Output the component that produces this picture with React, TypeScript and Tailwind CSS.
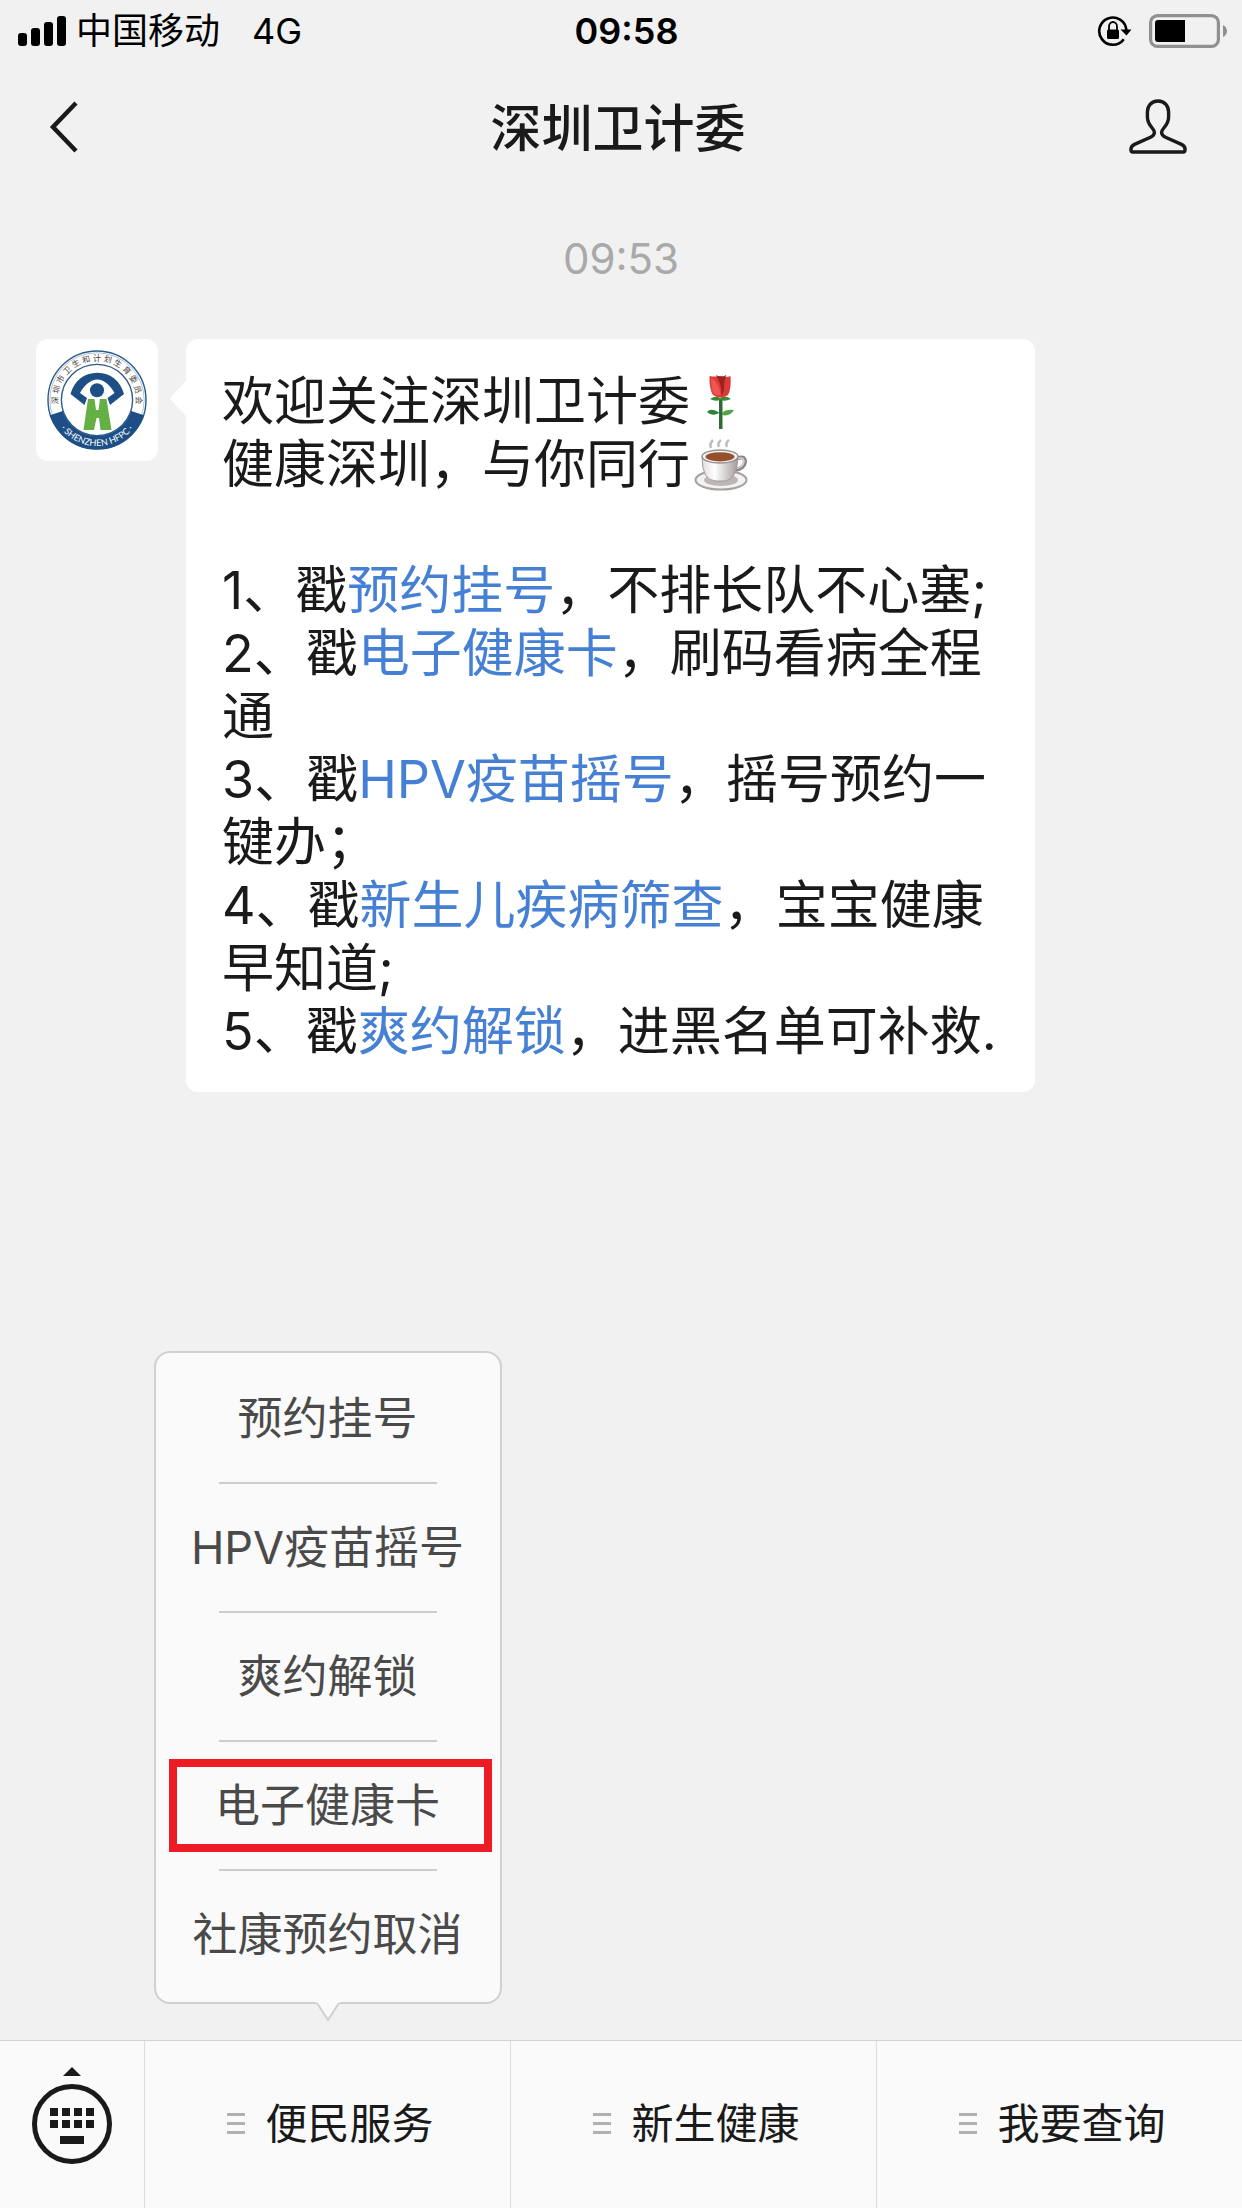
import React, { useState } from 'react';

interface MenuItem {
  id: string;
  label: string;
  marked?: boolean;
}

const menuItems: MenuItem[] = [
  { id: 'booking', label: '预约挂号' },
  { id: 'hpv', label: 'HPV疫苗摇号' },
  { id: 'unlock', label: '爽约解锁' },
  { id: 'card', label: '电子健康卡', marked: true },
  { id: 'cancel', label: '社康预约取消' },
];

const services = [
  { no: '1', link: '预约挂号', rest: '，不排长队不心塞;' },
  { no: '2', link: '电子健康卡', rest: '，刷码看病全程通' },
  { no: '3', link: 'HPV疫苗摇号', rest: '，摇号预约一键办；' },
  { no: '4', link: '新生儿疾病筛查', rest: '，宝宝健康早知道;' },
  { no: '5', link: '爽约解锁', rest: '，进黑名单可补救.' },
];

const tabs = ['便民服务', '新生健康', '我要查询'];

function SignalIcon() {
  return (
    <svg width="48" height="30" viewBox="0 0 48 30" aria-hidden="true">
      <rect x="0" y="17" width="9" height="13" rx="3" />
      <rect x="13" y="12" width="9" height="18" rx="3" />
      <rect x="26" y="6" width="9" height="24" rx="3" />
      <rect x="39" y="0" width="9" height="30" rx="3" />
    </svg>
  );
}

function RotationLockIcon() {
  return (
    <svg width="36" height="32" viewBox="0 0 36 32" fill="none" aria-hidden="true">
      <path d="M26.8 24.2 A13.6 13.6 0 1 1 29.4 15" stroke="black" strokeWidth="2.6" />
      <path d="M23.5 14.5 H34.5 L29.5 20.5 Z" fill="black" />
      <rect x="10" y="14.5" width="12" height="9.5" rx="1.5" fill="black" />
      <path d="M12 15 V11.5 A4 4.5 0 0 1 20 11.5 V15" stroke="black" strokeWidth="1.8" />
    </svg>
  );
}

function BatteryIcon() {
  return (
    <svg width="78" height="34" viewBox="0 0 78 34" aria-hidden="true">
      <rect x="1.6" y="1.6" width="67.8" height="30.8" rx="7" fill="none" stroke="#909090" strokeWidth="3.2" />
      <path d="M9 6 H36 V28 H9 Q6 28 6 25 V9 Q6 6 9 6 Z" />
      <path d="M74 11 Q78 13 78 17 T74 23 Z" fill="#909090" />
    </svg>
  );
}

function PersonIcon() {
  return (
    <svg width="58" height="56" viewBox="0 0 58 56" fill="none" aria-hidden="true">
      <path
        d="M29 2 C22 2 18.4 7.5 18.4 13 V18 C18.4 27 25.4 29 25.4 33.5 C25.4 36 23.6 37.2 21.5 38.2 L5.5 45.4 C2.6 46.8 1.9 48 1.9 50.5 C1.9 52.4 2.6 53 4 53 H54 C55.4 53 56.1 52.4 56.1 50.5 C56.1 48 55.4 46.8 52.5 45.4 L36.5 38.2 C34.4 37.2 32.6 36 32.6 33.5 C32.6 29 39.6 27 39.6 18 V13 C39.6 7.5 36 2 29 2 Z"
        stroke="#1a1a1a"
        strokeWidth="3.4"
        strokeLinejoin="round"
      />
    </svg>
  );
}

function Logo() {
  return (
    <svg className="h-full w-full" viewBox="0 0 122 122" role="img" aria-label="SHENZHEN HFPC">
      <circle cx="61" cy="61" r="49" fill="white" stroke="#2b5c8c" strokeWidth="1.4" />
      <circle cx="61" cy="61" r="47.2" fill="none" stroke="#9db6cb" strokeWidth="0.8" />
      <path d="M13.9 76.3 A49.5 49.5 0 0 0 108.1 76.3 L95.2 72.1 A36 36 0 0 1 26.8 72.1 Z" fill="#1d4f86" />
      <circle cx="61" cy="61" r="35.6" fill="white" stroke="#2b5c8c" strokeWidth="1.4" />
      <path id="logo-top" d="M24.4 74.3 A39 39 0 1 1 97.6 74.3" fill="none" />
      <path id="logo-bottom" d="M16 70.5 A46 46 0 0 0 106 70.5" fill="none" />
      <text fontSize="8" fill="#4a4038">
        <textPath href="#logo-top" startOffset="50%" textAnchor="middle">
          深 圳 市 卫 生 和 计 划 生 育 委 员 会
        </textPath>
      </text>
      <text fontSize="9" fill="white" fontFamily="Lato, sans-serif">
        <textPath href="#logo-bottom" startOffset="50%" textAnchor="middle">
          · SHENZHEN HFPC ·
        </textPath>
      </text>
      <path
        d="M34.5 55 C38 42 48 33.7 61.3 33.7 S84.5 42 88 55 L74 66 L71.5 59 L78.5 54 C74 46 68 40.5 61.3 40.5 S48.5 46 44 54 L51 59 L48.5 66 Z"
        fill="#1d4f86"
      />
      <circle cx="61" cy="51.3" r="7" fill="#1d4f86" />
      <path d="M52 60 H58.5 L60 71 H62.5 L64 60 H70.5 L75.5 91 H64.5 L63 79 H60.5 L58 91 H47.5 Z" fill="#65b045" />
    </svg>
  );
}

function RoseIcon() {
  return (
    <svg className="ml-1 inline-block align-[-9px]" width="54" height="54" viewBox="0 0 54 54" role="img" aria-label="玫瑰">
      <path d="M25 23 H28.5 V54 H25 Z" fill="#2c6b34" />
      <path d="M16 24 Q22 20 26 23 Q32 20 37 24 Q31 27 26.5 25 Q21 27 16 24 Z" fill="#3a8a3c" />
      <path d="M13 37 Q17 32 25.5 38 Q18 42 13 37 Z" fill="#2f8038" />
      <path d="M28 38 Q32 34 40 35 Q36 42 28 40 Z" fill="#54a44b" />
      <path d="M15.5 1 Q21 2 26 1 Q32 3 36.5 1 Q37.5 14 34 20 Q27 25 19 20 Q15 14 15.5 1 Z" fill="#dc3a38" />
      <path d="M22 0 Q27 3 32 0 L30 9 Q31 16 27 21 Q29 12 22 0 Z" fill="#9c2220" />
      <path d="M17 3 Q24 5 27 20 Q20 22 17.5 14 Z" fill="#ee5450" />
    </svg>
  );
}

function CoffeeIcon() {
  return (
    <svg className="ml-1 inline-block align-[-9px]" width="54" height="54" viewBox="0 0 54 54" role="img" aria-label="咖啡">
      <defs>
        <linearGradient id="cup" x1="0" x2="1">
          <stop offset="0" stopColor="#e0dcda" />
          <stop offset="0.35" stopColor="#ffffff" />
          <stop offset="1" stopColor="#a39b98" />
        </linearGradient>
      </defs>
      <ellipse cx="27" cy="42" rx="25.5" ry="9.5" fill="#f3f1f1" stroke="#a5a0a2" strokeWidth="2" />
      <ellipse cx="27" cy="42" rx="17" ry="6" fill="#bcb6b6" />
      <path d="M42 21 Q51 17 51 24 Q50 31 40 32" fill="none" stroke="#8d8687" strokeWidth="4" />
      <path d="M42 21 Q50 18 50 24 Q49 30 40 31" fill="none" stroke="#d5d0d0" strokeWidth="1.5" />
      <path d="M8 19 Q8 43 22 43 H31 Q43 42 44 19 Z" fill="url(#cup)" stroke="#a19a9a" strokeWidth="1" />
      <ellipse cx="26" cy="18.5" rx="18" ry="6.5" fill="#f6f4f2" stroke="#9a9292" strokeWidth="1.5" />
      <ellipse cx="26" cy="18.8" rx="14.5" ry="4.6" fill="#96502f" />
      <path d="M17 10 Q15 6 19 2 M25 9 Q23 5 27 2 M33 9 Q31 5 35 2" fill="none" stroke="#bdbdbd" strokeWidth="2.5" />
    </svg>
  );
}

function KeyboardIcon() {
  return (
    <svg width="80" height="97" viewBox="0 0 80 97" fill="#1a1a1a" aria-hidden="true">
      <path d="M31 9 L40 0 L49 9 Z" />
      <circle cx="40" cy="57" r="37.5" fill="none" stroke="#1a1a1a" strokeWidth="5" />
      {[41, 53].map((y) => [18, 30, 42, 54].map((x) => <rect key={`${x}-${y}`} x={x} y={y} width="8" height="8" />))}
      <rect x="28" y="69" width="24" height="8" />
    </svg>
  );
}

function PopupMenu() {
  return (
    <div className="absolute bottom-full left-1/2 mb-[37px] w-[348px] -translate-x-1/2 rounded-2xl border-2 border-[#d0d0d0] bg-[#fafafa]">
      <ul className="flex flex-col items-center pt-[2px] pb-[4px]">
        {menuItems.map((item, i) => (
          <li key={item.id} className="flex w-full flex-col items-center">
            {i > 0 && <div className="h-[2px] w-[218px] bg-[#cdcdcd]" />}
            <button type="button" className="relative h-[127px] w-full whitespace-nowrap text-[45px] leading-[60px] text-[#4a4a4a]">
              {item.label}
              {item.marked && <span className="absolute inset-y-[17px] right-[8px] left-[13px] border-8 border-[#ed1c24]" />}
            </button>
          </li>
        ))}
      </ul>
      <svg className="absolute top-full left-1/2 -translate-x-1/2" width="24" height="20" viewBox="0 0 24 20" aria-hidden="true">
        <path d="M0 0 H24 L12 17 Z" fill="#fafafa" />
        <path d="M1 1 L12 18 L23 1" fill="none" stroke="#d0d0d0" strokeWidth="2" />
      </svg>
    </div>
  );
}

export default function App() {
  const [openTab, setOpenTab] = useState(0);

  return (
    <div className="flex min-h-screen w-full flex-col bg-[#f1f1f1] font-['Inter','Noto_Sans_CJK_SC',sans-serif] text-[#1a1a1a]">
      {/* Status bar */}
      <div className="grid h-[62px] grid-cols-3 items-center pr-[15px] pl-[18px] text-[36px] leading-[60px] text-black">
        <div className="flex items-center gap-[10px] whitespace-nowrap">
          <SignalIcon />
          <span>中国移动</span>
          <span className="ml-[22px]">4G</span>
        </div>
        <span className="pl-2 text-center font-semibold">09:58</span>
        <div className="flex items-center justify-end gap-4">
          <RotationLockIcon />
          <BatteryIcon />
        </div>
      </div>

      {/* Chat header */}
      <header className="flex h-[130px] items-center justify-between pr-[55px] pl-[49px]">
        <button type="button" aria-label="返回" className="w-[58px]">
          <svg width="30" height="52" viewBox="0 0 30 52" fill="none" aria-hidden="true">
            <path d="M27 2 L4 26 L27 50" stroke="#1a1a1a" strokeWidth="4.5" />
          </svg>
        </button>
        <h1 className="pt-1 text-[51px] leading-[64px] font-medium">深圳卫计委</h1>
        <button type="button" aria-label="公众号资料">
          <PersonIcon />
        </button>
      </header>

      {/* Messages */}
      <main className="flex-1 pt-[37px]">
        <time className="block text-center text-[42px] leading-[60px] text-[#a9a9a9]">09:53</time>
        <div className="mt-[50px] flex items-start gap-[28px] pr-[207px] pl-[36px]">
          <div className="size-[122px] shrink-0 overflow-hidden rounded-xl bg-white">
            <Logo />
          </div>
          <div className="relative flex-1 rounded-xl bg-white px-[36px] pt-[31px] pb-[29px] text-[52px] leading-[63px]">
            <svg className="absolute top-[42px] right-full" width="16" height="36" viewBox="0 0 16 36" aria-hidden="true">
              <path d="M16 0 L1.5 15 Q0 17.5 1.5 20 L16 35 Z" fill="white" />
            </svg>
            <p>
              欢迎关注深圳卫计委
              <RoseIcon />
            </p>
            <p className="mb-[63px]">
              健康深圳，与你同行
              <CoffeeIcon />
            </p>
            {services.map((s) => (
              <p key={s.no}>
                {s.no}、戳
                <a href="#" className="text-[#4680d4]">
                  {s.link}
                </a>
                {s.rest}
              </p>
            ))}
          </div>
        </div>
      </main>

      {/* Bottom menu bar */}
      <nav className="flex h-[168px] border-t border-[#d4d4d4] bg-[#fafafa]">
        <button type="button" aria-label="键盘" className="flex w-[144px] justify-center pt-[26px]">
          <KeyboardIcon />
        </button>
        {tabs.map((tab, i) => (
          <div key={tab} className="relative flex-1 border-l border-[#dcdcdc]">
            <button
              type="button"
              onClick={() => setOpenTab(openTab === i ? -1 : i)}
              className="flex h-full w-full items-center justify-center gap-5 pb-[2px] pl-[6px] text-[42px] leading-[60px] whitespace-nowrap"
            >
              <svg width="18" height="21" viewBox="0 0 18 21" fill="#b0b0b0" aria-hidden="true">
                <path d="M0 0 H18 V3 H0 Z M0 9 H18 V12 H0 Z M0 18 H18 V21 H0 Z" />
              </svg>
              {tab}
            </button>
            {i === 0 && openTab === 0 && <PopupMenu />}
          </div>
        ))}
      </nav>
    </div>
  );
}
